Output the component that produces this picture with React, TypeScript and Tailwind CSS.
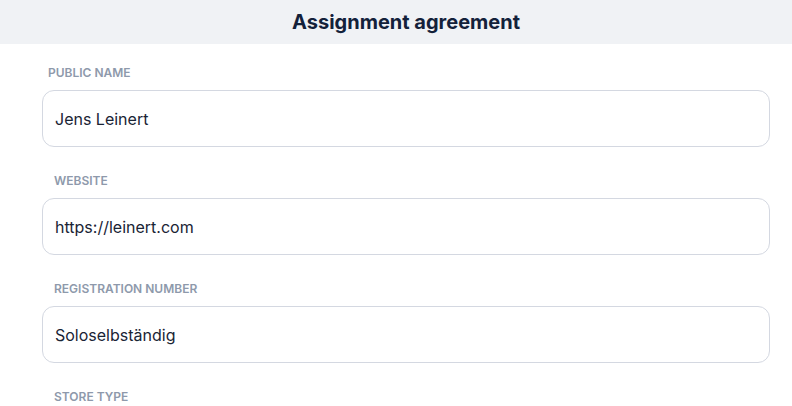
import React from "react";

const fields = [
  { label: "PUBLIC NAME", value: "Jens Leinert", offset: "pl-[6px]" },
  { label: "WEBSITE", value: "https://leinert.com", offset: "pl-[12px]" },
  { label: "REGISTRATION NUMBER", value: "Soloselbständig", offset: "pl-[12px]" },
];

export default function App() {
  return (
    <div className="min-h-[406px] bg-white" style={{ fontFamily: "Inter, 'Noto Sans', sans-serif" }}>
      <div className="h-[44px] bg-[#f0f2f5] flex items-center justify-center pl-[20px]">
        <h1 className="text-[20px] font-bold text-[#13213a]">Assignment agreement</h1>
      </div>
      <div className="pl-[42px] pr-[22px] pt-[21px] flex flex-col gap-[26px]">
        {fields.map((f) => (
          <div key={f.label} className="flex flex-col">
            <label className={`${f.offset} text-[12px] leading-[16px] font-semibold text-[#8e99ab] mb-[9px]`}>{f.label}</label>
            <div className="h-[57px] rounded-[12px] border border-[#d4d8e1] flex items-center pl-[12px] text-[16px] text-[#1a2435]">
              {f.value}
            </div>
          </div>
        ))}
        <div className="flex flex-col">
          <label className="pl-[12px] text-[12px] leading-[16px] font-semibold text-[#8e99ab]">STORE TYPE</label>
        </div>
      </div>
    </div>
  );
}
